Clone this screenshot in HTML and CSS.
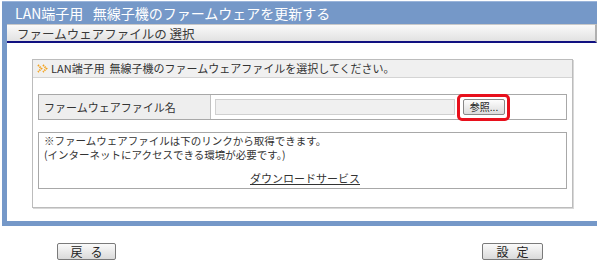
FILE: index.html
```html
<!DOCTYPE html>
<html lang="ja">
<head>
    <meta charset="UTF-8">
    <title>ファームウェアの更新</title>
    <link rel="stylesheet" href="styles.css">
</head>
<body>
    <div class="frame">
        <div class="title">LAN端子用&nbsp;&nbsp;&nbsp;無線子機のファームウェアを更新する</div>
        <div class="frame-body">
            <div class="subhead">ファームウェアファイルの 選択</div>
            <div class="content">
                <div class="box">
                    <div class="box-head">
                        <svg class="mark" viewBox="0 0 12 9" width="12" height="9">
                            <polyline points="1,1 4.5,4.5 1,8" fill="none" stroke="#f3a21c" stroke-width="1.8" stroke-dasharray="1.4 0.8"/>
                            <polyline points="6,1 9.5,4.5 6,8" fill="none" stroke="#f3a21c" stroke-width="1.8" stroke-dasharray="1.4 0.8"/>
                        </svg>
                        LAN端子用&nbsp;&nbsp;無線子機のファームウェアファイルを選択してください。
                    </div>
                    <div class="box-inner">
                        <div class="file-row">
                            <div class="label">ファームウェアファイル名</div>
                            <div class="value">
                                <span class="file-input"></span>
                                <span class="browse-wrap">
                                    <button class="browse">参照...</button>
                                    <span class="highlight"></span>
                                </span>
                            </div>
                        </div>
                        <div class="notes">
                            <div class="note-line">※ファームウェアファイルは下のリンクから取得できます。</div>
                            <div class="note-line">(インターネットにアクセスできる環境が必要です。)</div>
                            <a class="dl" href="#">ダウンロードサービス</a>
                        </div>
                    </div>
                </div>
            </div>
        </div>
    </div>

    <div class="actions">
        <button class="btn">戻&nbsp;&nbsp;&nbsp;る</button>
        <button class="btn btn-set">設&nbsp;&nbsp;&nbsp;定</button>
    </div>
</body>
</html>
```

FILE: styles.css
```css
body {
    margin: 0;
    padding: 0;
    background: #fff;
    font-family: "Noto Sans CJK JP", "Liberation Sans", sans-serif;
    font-size: 11px;
    color: #333;
}
.frame {
    margin: 1px 3px 0 2px;
    width: 595px;
}
.title {
    height: 22px;
    line-height: 23px;
    background: #7598c8;
    border-top: 1px solid #9ab4da;
    color: #fff;
    font-size: 14px;
    padding-left: 13px;
}
.frame-body {
    border-left: 5px solid #7598c8;
    border-bottom: 5px solid #7598c8;
}
.subhead {
    height: 16px;
    line-height: 17px;
    background: linear-gradient(#fafafa, #e2e2e2);
    border-top: 1px solid #c8c8c8;
    border-right: 2px solid #b0b0b0;
    border-bottom: 2px solid #101080;
    padding-left: 10px;
    font-size: 12.5px;
    color: #3a3a3a;
}
.content {
    padding: 16px 24px 13px 25px;
}
.box {
    border: 1px solid #bcbcbc;
    box-shadow: 1px 1px 0 #d8d8d8;
}
.box-head {
    height: 17px;
    line-height: 17px;
    background: #f0f0f0;
    border-bottom: 1px solid #d4d4d4;
    padding-left: 4px;
    display: flex;
    align-items: center;
    gap: 2px;
}
.mark {
    flex: none;
}
.box-inner {
    padding: 16px 5px 18px 5px;
}
.file-row {
    display: flex;
    height: 24px;
    border: 1px solid #a8a8a8;
}
.label {
    width: 166px;
    padding-left: 5px;
    background: #eeeeee;
    border-right: 1px solid #c0c0c0;
    line-height: 24px;
}
.value {
    flex: 1;
    display: flex;
    align-items: center;
    padding-left: 4px;
    gap: 8px;
}
.file-input {
    width: 238px;
    height: 14px;
    background: #f0f0f0;
    border: 1px solid #d0d0d0;
}
.browse-wrap {
    position: relative;
    display: inline-block;
}
.browse {
    display: block;
    width: 42px;
    height: 16px;
    padding: 0;
    font-family: inherit;
    font-size: 10px;
    line-height: 14px;
    color: #222;
    background: linear-gradient(#fdfdfd, #dcdcdc);
    border: 1px solid #888;
    border-radius: 2px;
}
.highlight {
    position: absolute;
    left: -6px;
    top: -5px;
    width: 47px;
    height: 21px;
    border: 3px solid #e8101c;
    border-radius: 5px;
}
.notes {
    margin-top: 12px;
    height: 54px;
    border: 1px solid #a8a8a8;
    padding: 1px 0 0 5px;
}
.note-line {
    height: 14px;
    line-height: 14px;
    font-size: 10.5px;
}
.dl {
    display: block;
    text-align: center;
    margin-top: 10px;
    line-height: 13px;
    color: #333;
    text-decoration: underline;
}
.actions {
    display: flex;
    justify-content: space-between;
    padding: 17px 57px 0 57px;
}
.btn {
    width: 59px;
    height: 17px;
    padding: 0;
    font-family: inherit;
    font-size: 12px;
    line-height: 15px;
    color: #222;
    background: linear-gradient(#fafafa, #dadada);
    border: 1px solid #7a7a7a;
    border-radius: 2px;
}
.btn-set {
    width: 61px;
}
```
